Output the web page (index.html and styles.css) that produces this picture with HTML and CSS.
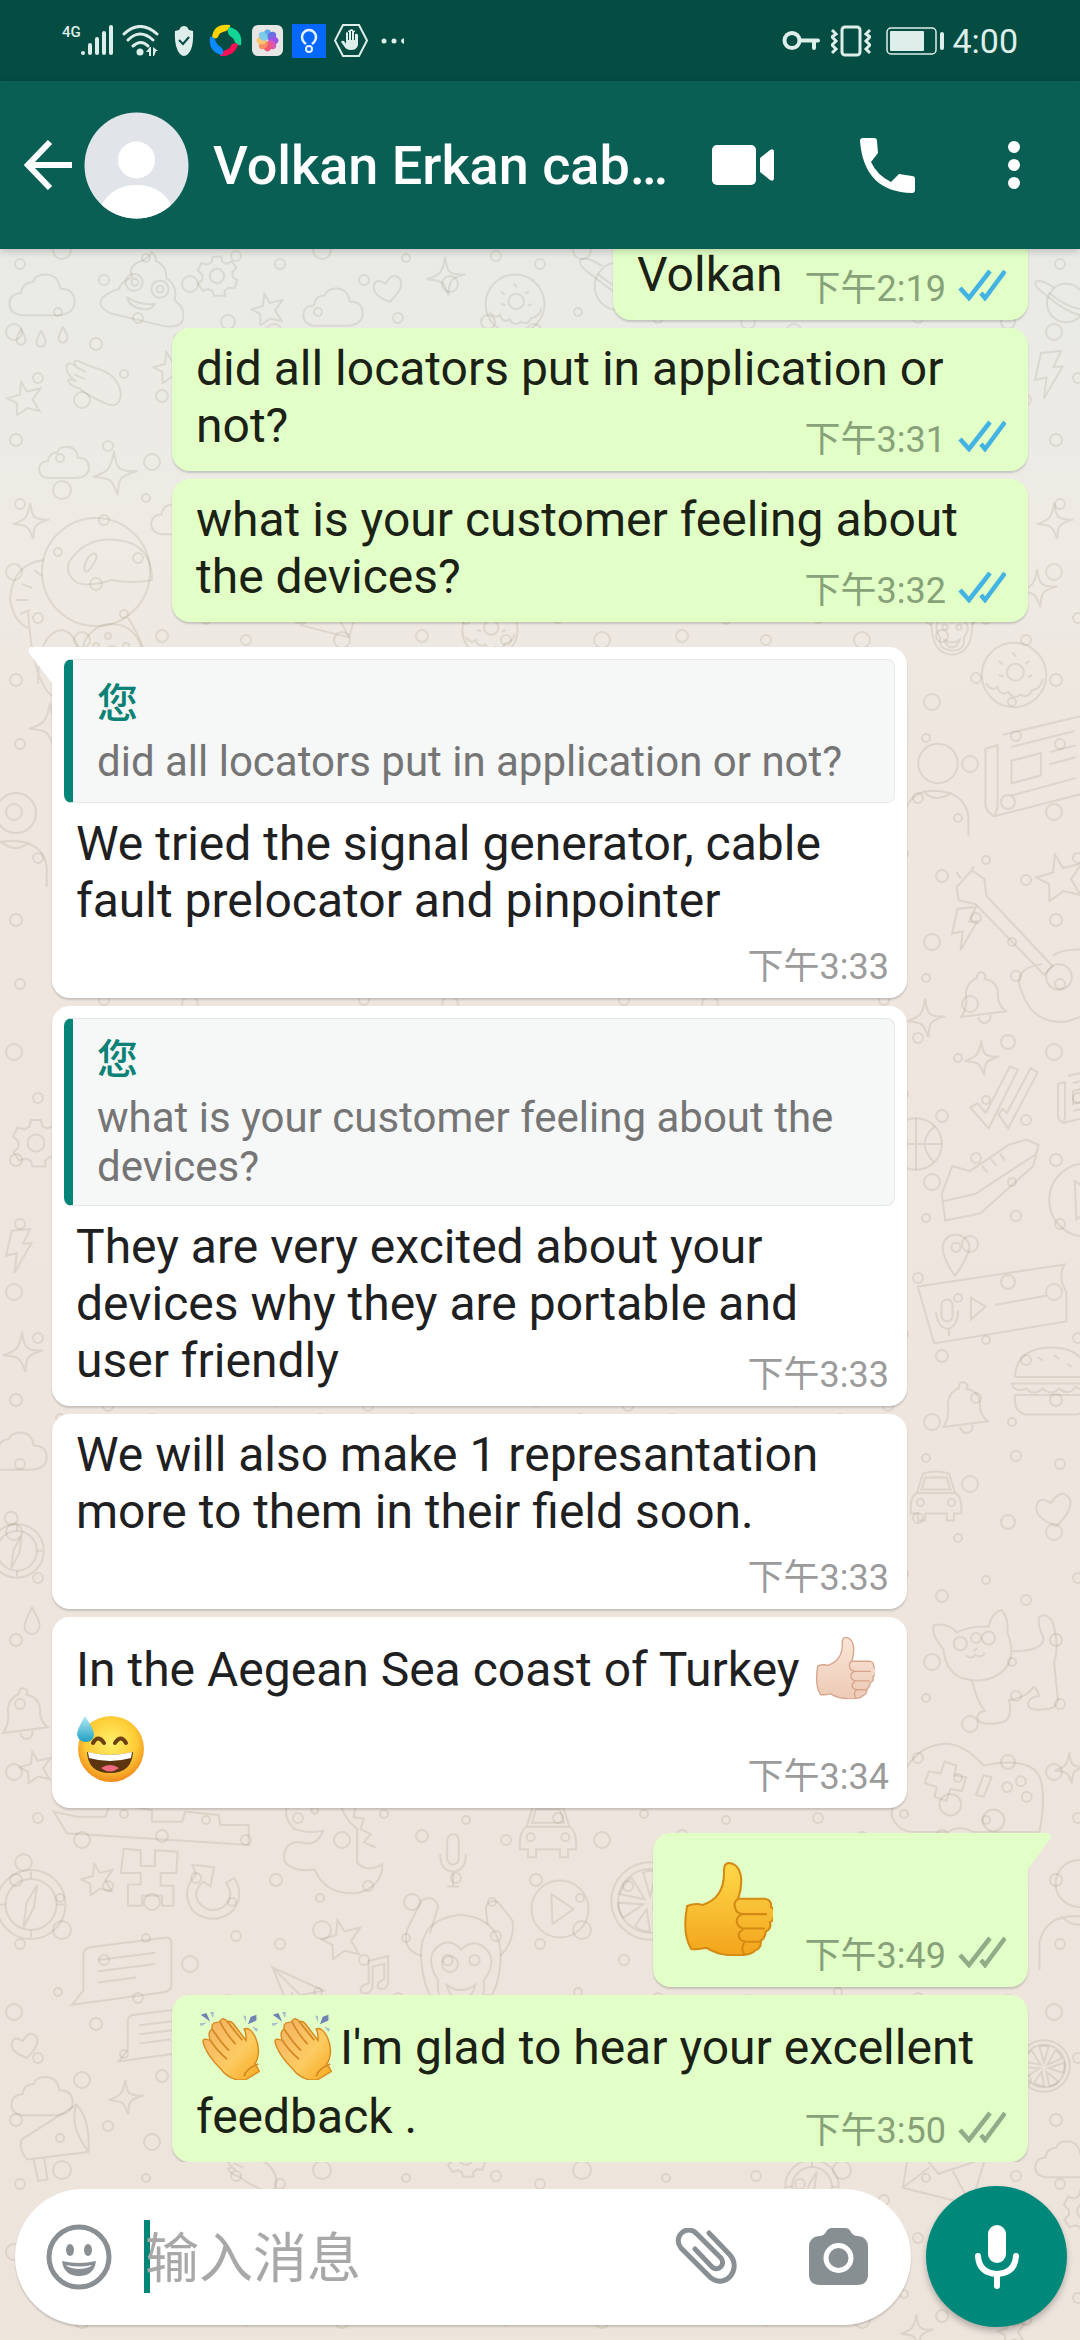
FILE: index.html
```html
<!DOCTYPE html>
<html lang="zh-CN">
<head>
  <meta charset="UTF-8">
  <meta name="viewport" content="width=device-width, initial-scale=1">
  <title>Volkan Erkan</title>
  <link rel="stylesheet" href="styles.css">
</head>
<body>
  <!-- shared shapes -->
  <svg class="defs" width="0" height="0" aria-hidden="true">
    <defs>
      <linearGradient id="skin" x1="0" y1="0" x2="0" y2="1">
        <stop offset="0" stop-color="#ffd94a"/>
        <stop offset="1" stop-color="#f2a41c"/>
      </linearGradient>
      <linearGradient id="clap-skin" x1="0" y1="0" x2="1" y2="1">
        <stop offset="0" stop-color="#f3b064"/>
        <stop offset=".6" stop-color="#fccb62"/>
        <stop offset="1" stop-color="#f6a81c"/>
      </linearGradient>
      <linearGradient id="skin-light" x1="0" y1="0" x2="0" y2="1">
        <stop offset="0" stop-color="#fbe6d8"/>
        <stop offset="1" stop-color="#eccab6"/>
      </linearGradient>
      <radialGradient id="face" cx=".5" cy=".4" r=".6">
        <stop offset="0" stop-color="#fff06a"/>
        <stop offset=".65" stop-color="#fdcb35"/>
        <stop offset="1" stop-color="#f08a1c"/>
      </radialGradient>
      <linearGradient id="drop" x1="0" y1="0" x2="0" y2="1">
        <stop offset="0" stop-color="#b5ecf5"/>
        <stop offset="1" stop-color="#1fa0c4"/>
      </linearGradient>

      <symbol id="ticks" viewBox="0 0 48 32">
        <path d="M2 19l9 10L32 2M23 24l4 5L47 2" fill="none" stroke="currentColor" stroke-width="4.500"/>
      </symbol>

      <symbol id="thumb" viewBox="0 0 88 92">
        <path d="M4 43q8-3 15-1q22-7 21-33q0-8 5-8q11 1 12 17q0 9-3 18h26q7 1 6 8q4 2 3 8q0 5-4 7q2 6-4 9q-1 7-5 9q1 7-6 10q-2 3-11 4q-22 2-36-7q-9 2-15 1q-9-14-4-42z"/>
        <path d="M54 36q-5 3-3 9q1 5 7 6h24M58 51q-7 3-5 9q2 5 7 5h20M59 66q-6 3-4 8q2 4 7 4h15M60 79q-4 5 0 12" fill="none"/>
      </symbol>

      <symbol id="clap" viewBox="0 0 66 72">
        <g fill="#6f83b5" stroke="none">
          <path d="M2 3l6-2 4 9z"/><path d="M52 13l3-8 6-2v6z"/>
        </g>
        <g fill="#a9bcc9" stroke="none">
          <path d="M12 0h4l-1 7zM1 12l8-1-7 4zM47 4h3v7zM56 15l7 3-2 3z"/>
        </g>
        <path d="M14 18q-1-7 5-7q3 0 4-2q3-4 7 1q4-1 7 3l13 17q0-9-2-12q6-3 12 9q4 9 3 17q-1 8-4 11q4 4 5 8l-15 9h-8q-12-3-18-12Q10 48 5 34q-2-6 3-5l4 1q-3-9 2-12z" fill="url(#clap-skin)" stroke="#d98a1e" stroke-width="1.500"/>
        <path d="M14 18q9 14 18 23M22 10q8 15 17 24M30 10l16 20M12 30q8 12 18 20M48 68q2-8 15-13" fill="none" stroke="#d48722" stroke-width="1.800"/>
      </symbol>

      <!-- wallpaper doodles -->
      <symbol id="d-cloud" viewBox="0 0 100 70"><path d="M20 62q-18-2-18-18q1-14 17-15q3-16 18-16q3-11 18-11q19 0 22 21q20 0 21 18q0 20-26 21z"/></symbol>
      <symbol id="d-star" viewBox="0 0 100 100"><path d="M42 5l16 27 38-9-22 31 19 32-34-8-28 20-1-34L4 51l34-10z"/></symbol>
      <symbol id="d-spark" viewBox="0 0 100 100"><path d="M48 2q3 30 12 38q12 8 38 6q-30 8-36 18q-5 10-6 34q-9-26-17-32Q30 60 2 58q26-8 33-17Q43 31 48 2z"/></symbol>
      <symbol id="d-heart" viewBox="0 0 100 90"><path d="M56 85Q2 66 6 36Q12 8 42 28Q70-14 90 18Q98 46 56 85z"/></symbol>
      <symbol id="d-gear" viewBox="0 0 100 100"><path d="M40 4h20l3 13 10 4 12-6 11 15-9 10v12l11 8-7 19-14-1-9 8 1 11H43l-4-12-10-4-13 4L5 68l10-9V47L4 37l9-18 14 4 10-6z"/><circle cx="50" cy="50" r="17"/></symbol>
      <symbol id="d-donut" viewBox="0 0 100 100"><circle cx="50" cy="50" r="46"/><circle cx="52" cy="46" r="12"/><path d="M10 62q8 12 16 5q5 14 16 7q6 12 17 4q12 6 16-6q14-2 16-16M28 30l6 5M48 18l5 6M72 30l-6 4M28 50l7 2M76 50l-6 3"/></symbol>
      <symbol id="d-drop" viewBox="0 0 40 60"><path d="M20 3q16 28 15 36q-2 16-15 17Q5 54 5 40Q6 30 20 3z"/></symbol>
      <symbol id="d-planet" viewBox="0 0 120 100"><circle cx="64" cy="52" r="36"/><path d="M30 40Q4 22 6 14Q12 4 40 22M30 40q40 34 70 36Q118 74 96 52M33 33q28 26 66 32"/></symbol>
      <symbol id="d-bolt" viewBox="0 0 60 100"><path d="M14 6l40-4-15 32 18-1-37 64 5-42-23 5z"/></symbol>
      <symbol id="d-astro" viewBox="0 0 180 190">
        <circle cx="88" cy="58" r="54"/><path d="M64 44q16-22 46-18q34 4 34 40q-20 4-40 0q-26 8-36 2q-14-12-4-24zM76 54q4-16 12-14q2 4-4 12q-6 10-8 2z"/>
        <path d="M36 46Q4 50 2 86q4 22 18 28M26 56l8 6M14 70l10 4M8 86h12M12 100l10-4M20 96q4 70 24 86M120 104q20 30 24 70M30 170q0-52 24-54q22 4 20 60"/>
        <circle cx="104" cy="140" r="30"/><circle cx="104" cy="140" r="8"/><circle cx="88" cy="132" r="3"/><circle cx="100" cy="122" r="3"/><circle cx="118" cy="132" r="3"/><circle cx="90" cy="152" r="3"/>
      </symbol>
      <symbol id="d-poop" viewBox="0 0 100 90"><path d="M40 30q-6-12 8-18q12-4 14-11q6 4 5 10q14 6 12 20q14 8 10 26q16 12 8 26q-6 6-20 4L14 72Q-6 62 10 50q10-6 14-6q2-8 16-14z"/><circle cx="42" cy="36" r="10"/><circle cx="72" cy="44" r="10"/><circle cx="43" cy="36" r="4"/><circle cx="72" cy="44" r="4"/><path d="M34 54q18 10 32 7q-4 8-14 6q-16-2-18-13z"/></symbol>
      <symbol id="d-hand" viewBox="0 0 100 80"><path d="M8 8q6-6 16 4q-8-14 4-10q10 6 36 14Q96 28 98 58q-2 22-22 16Q40 58 30 48q-16-4-20-14q4-4 14 2Q4 22 8 8zM24 12l16 8M20 24l18 8"/></symbol>
      <symbol id="d-news" viewBox="0 0 120 120"><path d="M24 24L116 2v90L14 118Q2 112 4 98V40l14-4v68q0 6-4 14M34 38l72-18M34 54l34-9v26l-34 9zM78 44l30-8M78 58l30-8M34 94l74-20"/></symbol>
      <symbol id="d-guitar" viewBox="0 0 140 150"><path d="M4 20L18 4l12 8 2 16 62 66-8 8-64-66-16-4zM8 12l-4-6M18 6l2-6M84 92q-30 4-18 28q10 28 40 26q34-8 30-34q10-26-12-34q-22 0-30 6"/><circle cx="100" cy="104" r="12"/></symbol>
      <symbol id="d-bell" viewBox="0 0 90 100"><path d="M34 14q0-12 10-10q8 4 4 12q26 4 24 34q2 14 14 24L6 84Q18 66 14 40Q18 20 34 14zM36 84q4 14 16 10q8-4 6-14"/></symbol>
      <symbol id="d-ticks" viewBox="0 0 100 100"><path d="M2 62l10-6 12 14L58 4l12 4-42 84zM42 72l6-8 6 6L88 6l10 6-42 80z"/></symbol>
      <symbol id="d-ball" viewBox="0 0 100 100"><circle cx="50" cy="50" r="46"/><path d="M50 4v92M4 50h92M16 18q36 30 2 64M84 18q-36 30-2 64"/></symbol>
      <symbol id="d-shoe" viewBox="0 0 120 100"><path d="M4 66L16 34l20 6 44-30 20-6 14 6-6 24-60 54-40 8zM6 74l36-8 70-46M50 34l6 8M60 26l6 8M70 20l6 8"/></symbol>
      <symbol id="d-voice" viewBox="0 0 170 90"><path d="M4 26L164 2q-8 14 2 30v32L22 88zM62 38v24l16-14zM88 46l56-10"/><rect x="30" y="40" width="12" height="24" rx="6"/><path d="M24 54q2 18 14 18q10-4 10-20M38 72v8"/></symbol>
      <symbol id="d-burger" viewBox="0 0 100 90"><path d="M6 40Q8 4 50 4t44 36zM2 48h96q-6 12-18 4q-8 12-20 2q-10 10-20 0q-12 10-20 0Q6 60 2 48zM6 62h88q2 22-14 24H20Q4 84 6 62zM34 16l6 4M54 14l6 4M70 24l5 4"/></symbol>
      <symbol id="d-cat" viewBox="0 0 140 130"><path d="M14 44Q0 28 4 18q16-2 24 8q18-8 34-6Q66 4 76 2q8 10 6 24q12 30-8 44q-18 12-42 4Q16 66 14 44zM88 46q36 0 32-16q-6-12-4-20q6-6 14 4q8 26 2 44q2 22 4 40q-2 10-14 10q-18 2-18-6q2-8 12-8q-2-8-6-10q-8 12-26 14q4 22-8 24q-22 4-26-4q0-8 8-8q-8-10-14-34"/><circle cx="32" cy="38" r="7"/><circle cx="62" cy="32" r="7"/><path d="M38 50q6 6 10 0q6 4 10-2M46 46l4-3"/></symbol>
      <symbol id="d-pad" viewBox="0 0 160 100"><path d="M2 76Q12 8 54 4q20-2 42 22q50-10 58 14q6 20-2 58M2 76q4 16 22 18h36q10-8 26 0h66M56 22l12 4-2 10 12 2-4 14-12-2-4 12-12-4 2-10-12-4 4-12 12 2zM96 36l8 2-8 20-8-2z"/><circle cx="62" cy="66" r="11"/><circle cx="106" cy="82" r="11"/><circle cx="120" cy="48" r="5"/><circle cx="134" cy="42" r="5"/><circle cx="140" cy="58" r="5"/></symbol>
      <symbol id="d-compass" viewBox="0 0 100 120"><circle cx="50" cy="70" r="46"/><circle cx="50" cy="70" r="34"/><circle cx="40" cy="14" r="11"/><path d="M58 44l-4 30-14 26 4-32zM50 26v10M50 104v10M6 70h10M84 70h10"/></symbol>
      <symbol id="d-creeper" viewBox="0 0 90 90"><path d="M8 4l24 2v22h20V6l32 2-2 30H60v18h18v28H62V70H34v14H14V54h18V38H4z"/></symbol>
      <symbol id="d-arrow" viewBox="0 0 100 100"><path d="M20 24l-6-16 36 4-6 32-12-8q-18 16-8 34q18 22 42 8q20-18 4-40l14-8q18 30-4 56q-32 24-64 0Q-8 54 20 24z"/></symbol>
      <symbol id="d-play" viewBox="0 0 100 100"><circle cx="50" cy="50" r="46"/><path d="M36 26l36 24-34 24z"/></symbol>
      <symbol id="d-citrus" viewBox="0 0 100 100"><circle cx="50" cy="50" r="46"/><circle cx="50" cy="50" r="38"/><path d="M50 44L42 16q8-4 16 0zM56 48l14-26q8 4 12 14zM58 54l28-10q2 10-2 18zM54 60l22 18q-8 8-16 8zM46 60l4 26q-10 0-18-6zM42 54L18 70q-6-8-6-18zM44 48L14 42q4-12 14-20z"/></symbol>
      <symbol id="d-chat" viewBox="0 0 130 90"><path d="M26 14L122 2q6 0 6 8v52q0 6-8 8l-86 12-30 4 14-18V24q0-8 8-10zM36 30l72-9M36 44l72-9M36 58l48-6"/></symbol>
      <symbol id="d-monkey" viewBox="0 0 120 120"><path d="M22 68Q16 24 60 20q42 4 38 48q-4 46-38 48Q26 114 22 68zM38 84q-16-26 4-36q10-4 18 6q10-10 20-4q18 12 2 34q4 24-22 24q-26-2-22-24z"/><circle cx="47" cy="64" r="5"/><circle cx="73" cy="64" r="5"/><path d="M46 88q14 10 28 0q-4 14-14 14t-14-14zM22 60Q2 54 8 34l14-28q12-6 16 6l-8 26M98 60q14-14 12-34L96 8Q86 4 84 14l2 16"/></symbol>
      <symbol id="d-mic" viewBox="0 0 60 100"><rect x="20" y="4" width="20" height="52" rx="10"/><path d="M8 38q0 30 22 30t22-30M30 68v26M20 94h20"/></symbol>
      <symbol id="d-horn" viewBox="0 0 100 110"><path d="M6 52L78 6q18 18 16 62L14 78Q2 66 6 52zM78 6q-10 28 16 62M22 78l6 28 12-2-4-28"/></symbol>
      <symbol id="d-mail" viewBox="0 0 110 90"><path d="M12 4l96 22-18 60L2 64zM12 4l36 42 60-20M2 64l34-26M90 86L66 42"/></symbol>
      <symbol id="d-car" viewBox="0 0 100 90"><path d="M18 40L28 8q22-8 44 0l10 32q12 6 10 34H80v12H68V74H32v12H20V74H8Q6 46 18 40zM18 40h64M32 14h36l6 20H26z"/><circle cx="24" cy="56" r="6"/><circle cx="76" cy="56" r="6"/></symbol>
      <symbol id="d-note" viewBox="0 0 70 90"><path d="M22 14l40-10v58q-6 14-20 8q-6-12 12-18V20L30 26v44q-8 16-24 8q-4-14 16-18z"/></symbol>
      <symbol id="d-plane" viewBox="0 0 100 90"><path d="M4 6l92 42-42 8-18 28zM4 6l50 50M36 84l4-34"/></symbol>
      <symbol id="d-dino" viewBox="0 0 150 130"><path d="M16 6Q2 30 20 46q14 6 34 2q-8 20-26 14q-22-2-20 22q10 14 36 10q12 30 50 28q30-8 30-34q-18 10-30-2V46q-14-10-20-30M84 8l-4 12 12 0-2 12 12 2-4 12 12 6-8 10 14 6"/><circle cx="44" cy="24" r="4"/></symbol>
      <symbol id="d-ship" viewBox="0 0 240 60"><path d="M2 14l28 6h34l6-16 50 8v14h36l4-12 40 4 2 12h34v24L18 40z"/></symbol>
      <symbol id="d-pin" viewBox="0 0 60 90"><path d="M28 86Q2 48 4 28Q10 2 34 6q24 6 22 28Q50 54 28 86z"/><circle cx="30" cy="30" r="9"/></symbol>
      <symbol id="d-people" viewBox="0 0 100 130"><circle cx="50" cy="30" r="26"/><path d="M6 126V96q6-30 40-30q40 2 44 34v26M30 66q16 18 38 2"/></symbol>

      <pattern id="bubbles" width="260" height="240" patternUnits="userSpaceOnUse">
        <circle cx="20" cy="24" r="5"/><circle cx="62" cy="10" r="9"/><circle cx="104" cy="40" r="5"/>
        <circle cx="146" cy="18" r="4"/><circle cx="190" cy="44" r="8"/><circle cx="236" cy="16" r="5"/>
        <circle cx="14" cy="92" r="8"/><circle cx="58" cy="72" r="4"/><circle cx="96" cy="104" r="6"/>
        <circle cx="138" cy="78" r="5"/><circle cx="178" cy="98" r="4"/><circle cx="228" cy="82" r="7"/>
        <circle cx="38" cy="138" r="5"/><circle cx="82" cy="160" r="8"/><circle cx="124" cy="134" r="4"/>
        <circle cx="162" cy="156" r="6"/><circle cx="206" cy="140" r="4"/><circle cx="246" cy="160" r="5"/>
        <circle cx="16" cy="200" r="6"/><circle cx="60" cy="218" r="4"/><circle cx="108" cy="206" r="5"/>
        <circle cx="152" cy="222" r="8"/><circle cx="196" cy="198" r="5"/><circle cx="232" cy="222" r="4"/>
      </pattern>
    </defs>
  </svg>

  <div class="app">
    <svg class="wallpaper" viewBox="0 0 1080 2340" preserveAspectRatio="xMidYMin slice" aria-hidden="true">
      <rect width="1080" height="2340" fill="url(#bubbles)" stroke="none"/>
      <use href="#d-cloud" x="8" y="272" width="68" height="50"/>
      <use href="#d-poop" x="98" y="246" width="86" height="88"/>
      <use href="#d-gear" x="196" y="254" width="42" height="44"/>
      <use href="#d-star" x="250" y="292" width="34" height="34"/>
      <use href="#d-cloud" x="302" y="286" width="62" height="46"/>
      <use href="#d-heart" x="372" y="274" width="32" height="30"/>
      <use href="#d-spark" x="426" y="256" width="40" height="40"/>
      <use href="#d-donut" x="470" y="272" width="90" height="64"/>
      <use href="#d-planet" x="576" y="250" width="80" height="70"/>
      <use href="#d-drop" x="14" y="328" width="14" height="18"/>
      <use href="#d-drop" x="34" y="330" width="14" height="18"/>
      <use href="#d-drop" x="56" y="326" width="14" height="18"/>
      <use href="#d-hand" x="62" y="358" width="60" height="52"/>
      <use href="#d-star" x="6" y="380" width="36" height="36"/>
      <use href="#d-star" x="152" y="350" width="34" height="34"/>
      <use href="#d-cloud" x="38" y="442" width="52" height="44"/>
      <use href="#d-spark" x="92" y="450" width="46" height="46"/>
      <use href="#d-spark" x="12" y="502" width="38" height="38"/>
      <use href="#d-astro" x="8" y="514" width="180" height="190"/>
      <use href="#d-cloud" x="150" y="490" width="60" height="56"/>
      <use href="#d-planet" x="1032" y="272" width="64" height="60"/>
      <use href="#d-bolt" x="1032" y="350" width="34" height="50"/>
      <use href="#d-spark" x="1036" y="502" width="38" height="38"/>
      <use href="#d-spark" x="1018" y="566" width="40" height="44"/>
      <use href="#d-donut" x="460" y="600" width="60" height="60"/>
      <use href="#d-mail" x="300" y="590" width="60" height="50"/>
      <use href="#d-monkey" x="920" y="590" width="64" height="70"/>
      <use href="#d-donut" x="974" y="640" width="80" height="70"/>
      <use href="#d-spark" x="28" y="700" width="46" height="50"/>
      <use href="#d-people" x="-24" y="790" width="80" height="100"/>
      <use href="#d-people" x="900" y="740" width="76" height="100"/>
      <use href="#d-news" x="982" y="714" width="104" height="104"/>
      <use href="#d-guitar" x="952" y="866" width="150" height="160"/>
      <use href="#d-star" x="1034" y="852" width="50" height="50"/>
      <use href="#d-bolt" x="948" y="906" width="34" height="46"/>
      <use href="#d-bell" x="958" y="970" width="50" height="56"/>
      <use href="#d-spark" x="906" y="996" width="40" height="44"/>
      <use href="#d-spark" x="964" y="1038" width="36" height="40"/>
      <use href="#d-ticks" x="964" y="1064" width="80" height="70"/>
      <use href="#d-news" x="1056" y="1064" width="60" height="60"/>
      <use href="#d-ball" x="886" y="1116" width="60" height="56"/>
      <use href="#d-shoe" x="936" y="1136" width="110" height="88"/>
      <use href="#d-play" x="1046" y="1160" width="80" height="80"/>
      <use href="#d-pin" x="938" y="1232" width="36" height="46"/>
      <use href="#d-voice" x="914" y="1262" width="156" height="84"/>
      <use href="#d-gear" x="10" y="1118" width="52" height="50"/>
      <use href="#d-bolt" x="2" y="1228" width="34" height="46"/>
      <use href="#d-spark" x="2" y="1330" width="42" height="44"/>
      <use href="#d-burger" x="1010" y="1344" width="82" height="74"/>
      <use href="#d-bell" x="940" y="1380" width="50" height="56"/>
      <use href="#d-cloud" x="-14" y="1430" width="62" height="46"/>
      <use href="#d-car" x="906" y="1466" width="60" height="60"/>
      <use href="#d-heart" x="1034" y="1490" width="40" height="40"/>
      <use href="#d-compass" x="-14" y="1510" width="62" height="70"/>
      <use href="#d-drop" x="22" y="1606" width="20" height="30"/>
      <use href="#d-bell" x="0" y="1686" width="50" height="56"/>
      <use href="#d-star" x="18" y="1750" width="34" height="34"/>
      <use href="#d-cat" x="926" y="1608" width="140" height="122"/>
      <use href="#d-pad" x="888" y="1740" width="160" height="98"/>
      <use href="#d-spark" x="1054" y="1752" width="32" height="32"/>
      <use href="#d-ship" x="34" y="1800" width="236" height="50"/>
      <use href="#d-dino" x="266" y="1790" width="150" height="110"/>
      <use href="#d-car" x="510" y="1800" width="76" height="60"/>
      <use href="#d-compass" x="-8" y="1852" width="78" height="90"/>
      <use href="#d-star" x="80" y="1862" width="34" height="34"/>
      <use href="#d-creeper" x="118" y="1846" width="64" height="64"/>
      <use href="#d-arrow" x="184" y="1856" width="60" height="68"/>
      <use href="#d-mic" x="434" y="1832" width="38" height="58"/>
      <use href="#d-play" x="528" y="1878" width="64" height="62"/>
      <use href="#d-citrus" x="608" y="1858" width="84" height="86"/>
      <use href="#d-star" x="320" y="1918" width="42" height="42"/>
      <use href="#d-monkey" x="396" y="1894" width="130" height="124"/>
      <use href="#d-plane" x="264" y="1964" width="68" height="50"/>
      <use href="#d-note" x="358" y="1954" width="34" height="44"/>
      <use href="#d-chat" x="54" y="1936" width="134" height="72"/>
      <use href="#d-chat" x="108" y="2006" width="100" height="58"/>
      <use href="#d-heart" x="10" y="2032" width="30" height="28"/>
      <use href="#d-cloud" x="10" y="2070" width="64" height="56"/>
      <use href="#d-spark" x="108" y="2076" width="36" height="42"/>
      <use href="#d-horn" x="10" y="2100" width="90" height="84"/>
      <use href="#d-hand" x="210" y="2150" width="80" height="44"/>
      <use href="#d-gear" x="446" y="2138" width="40" height="40"/>
      <use href="#d-compass" x="782" y="2146" width="60" height="70"/>
      <use href="#d-people" x="1034" y="1850" width="90" height="130"/>
      <use href="#d-citrus" x="1016" y="2038" width="56" height="56"/>
      <use href="#d-mail" x="896" y="2138" width="96" height="70"/>
      <use href="#d-cloud" x="1034" y="2136" width="60" height="50"/>
      <use href="#d-gear" x="1062" y="2188" width="46" height="46"/>
      <use href="#d-spark" x="900" y="2314" width="34" height="34"/>
      <use href="#d-star" x="996" y="2316" width="30" height="30"/>
    </svg>

    <div class="screen">
      <div class="status-bar">
        <div class="status-left">
          <span class="network">4G</span>
          <svg width="33" height="31" viewBox="0 0 33 31" fill="currentColor">
            <circle cx="2" cy="28" r="2"/><rect x="7" y="18" width="4" height="12" rx="2"/><rect x="14" y="12" width="4" height="18" rx="2"/><rect x="21" y="6" width="4" height="24" rx="2"/><rect x="28" y="0" width="4" height="30" rx="2"/>
          </svg>
          <svg class="wifi" width="38" height="32" viewBox="0 0 38 32">
            <g fill="none" stroke="currentColor" stroke-width="3" stroke-linecap="round">
              <path d="M2 9Q18-6 35 9M6 15q12-12 25 0M11 21q8-7 15 0"/>
            </g>
            <circle cx="18" cy="27" r="3.500" fill="currentColor"/>
            <path d="M24 27l4-5h1v9h-2v-4zM31 22l5 4h-2l-2 5h-1z" fill="currentColor"/>
          </svg>
          <svg class="shield" width="20" height="32" viewBox="0 0 20 32">
            <path d="M7 2q3-2 6 0l2 3 4 1q1 17-5 23q-4 4-8 0Q0 22 1 6l4-1z" fill="currentColor"/>
            <path d="M5 15l4 4 6-7" fill="none" stroke="#054c43" stroke-width="2"/>
          </svg>
          <svg class="wheel" width="33" height="33" viewBox="0 0 33 33">
            <path d="M3 13Q5-1 21 1q1 5-7 7q-4 1-5 5q-3 3-6 0z" fill="#ffd400"/>
            <path d="M20 3q14 3 12 18q-4 1-6-3q-1-4-5-6q-4-4-1-9z" fill="#12d694"/>
            <path d="M29 20q-3 13-18 12q-1-4 6-6q4-1 5-5q3-3 7-1z" fill="#fb0f56"/>
            <path d="M1 13q4-1 6 5q1 3 5 5q4 4 1 8Q-1 28 1 13z" fill="#0c8bff"/>
          </svg>
          <svg class="gallery" width="31" height="31" viewBox="0 0 31 31">
            <rect width="31" height="31" rx="6" fill="#e6e6e4"/>
            <g transform="translate(15.500 15.500)">
              <ellipse cy="-6" rx="4" ry="5" fill="#5aa9ea"/>
              <ellipse cy="-6" rx="4" ry="5" fill="#6a6fe0" transform="rotate(45)"/>
              <ellipse cy="-6" rx="4" ry="5" fill="#9a55e6" transform="rotate(90)"/>
              <ellipse cy="-6" rx="4" ry="5" fill="#d958b0" transform="rotate(135)"/>
              <ellipse cy="-6" rx="4" ry="5" fill="#f0557a" transform="rotate(180)"/>
              <ellipse cy="-6" rx="4" ry="5" fill="#fb8c62" transform="rotate(225)"/>
              <ellipse cy="-6" rx="4" ry="5" fill="#fbc571" transform="rotate(270)"/>
              <ellipse cy="-6" rx="4" ry="5" fill="#7ccbe8" transform="rotate(315)"/>
            </g>
          </svg>
          <svg class="tip" width="34" height="34" viewBox="0 0 34 34">
            <rect width="34" height="34" fill="#0668fb"/>
            <path d="M14 20q-4-3-4-7a7 7 0 0 1 14 0q0 4-4 7" fill="none" stroke="#e6f2ff" stroke-width="2.500"/>
            <circle cx="17" cy="25" r="3" fill="none" stroke="#e6f2ff" stroke-width="2"/>
          </svg>
          <svg class="stop" width="34" height="33" viewBox="0 0 34 33">
            <path d="M9 1h16l8 15.500L25 32H9L1 16.500z" fill="none" stroke="currentColor" stroke-width="2"/>
            <path d="M12 20V9q1-2 2 0V7q2-2 2 0V6q2-2 3 0v1q2-2 2 1v2q2-1 3 1v10q-1 5-7 5q-5 0-7-4l-3-4q1-2 3-1z" fill="currentColor"/>
            <path d="M14.500 8v8M17.500 7v9M20.500 8v8" stroke="#054c43" stroke-width="1"/>
          </svg>
          <svg class="more" width="24" height="6" viewBox="0 0 24 6" fill="currentColor"><circle cx="3" cy="3" r="2.500"/><circle cx="13" cy="3" r="2.500"/><path d="M23 0v6q-3-1-3-3t3-3z"/></svg>
        </div>
        <div class="status-right">
          <svg width="39" height="19" viewBox="0 0 39 19">
            <circle cx="10" cy="9.500" r="7.500" fill="none" stroke="currentColor" stroke-width="4"/>
            <path d="M18 9.500h18M32 10v7" fill="none" stroke="currentColor" stroke-width="4" stroke-linecap="round"/>
          </svg>
          <svg class="vibrate" width="40" height="32" viewBox="0 0 40 32" fill="none" stroke="currentColor" stroke-width="3">
            <rect x="11" y="2" width="18" height="28" rx="3"/>
            <path d="M1 5l4 4-4 3 4 4-4 4 4 4-4 4M39 5l-4 4 4 3-4 4 4 4-4 4 4 4"/>
          </svg>
          <svg class="battery" width="58" height="28" viewBox="0 0 58 28">
            <rect x="1" y="1" width="49" height="26" rx="4" fill="none" stroke="currentColor" stroke-width="1.500"/>
            <rect x="4" y="4" width="34" height="20" rx="1" fill="currentColor"/>
            <rect x="54" y="5" width="4" height="18" rx="2" fill="currentColor"/>
          </svg>
          <span class="clock">4:00</span>
        </div>
      </div>

      <header class="chat-header">
        <button class="icon-button back" aria-label="返回">
          <svg width="48" height="50" viewBox="0 0 48 50"><path d="M26 2L4 25l22 23M4 25h44" fill="none" stroke="#fff" stroke-width="6"/></svg>
        </button>
        <svg class="avatar" width="105" height="107" viewBox="0 0 105 107">
          <defs><clipPath id="round"><ellipse cx="52.500" cy="53.500" rx="52" ry="53"/></clipPath></defs>
          <g clip-path="url(#round)">
            <rect width="105" height="107" fill="#e1e5e9"/>
            <circle cx="52.500" cy="48" r="18.500" fill="#fff"/>
            <path d="M17 94q11-21 35.500-21T88 94v20H17z" fill="#fff"/>
          </g>
        </svg>
        <h1 class="contact">Volkan Erkan cab…</h1>
        <button class="icon-button video" aria-label="视频通话">
          <svg width="62" height="40" viewBox="0 0 62 40" fill="#fff"><rect width="44" height="40" rx="5"/><path d="M48 13l10-8q4-2 4 2v26q0 4-4 2l-10-8z"/></svg>
        </button>
        <button class="icon-button call" aria-label="语音通话">
          <svg width="55" height="55" viewBox="0 0 55 55" fill="#fff"><path d="M3 0h11q3 0 3 3l1 12-7 9q6 13 20 20l8-8 13 2q3 0 3 3v11q0 3-3 3Q4 54 0 3q0-3 3-3z"/></svg>
        </button>
        <button class="icon-button menu" aria-label="更多选项">
          <svg width="12" height="48" viewBox="0 0 12 48" fill="#fff"><circle cx="6" cy="6" r="6"/><circle cx="6" cy="24" r="6"/><circle cx="6" cy="42" r="6"/></svg>
        </button>
      </header>

      <main class="messages">
        <div class="bubble sent">
          <div class="content inline">
            <p class="text">Volkan</p>
            <div class="meta read"><time>下午2:19</time><svg class="ticks"><use href="#ticks"/></svg></div>
          </div>
        </div>

        <div class="bubble sent">
          <div class="content">
            <p class="text">did all locators put in application or not?</p>
            <div class="meta read"><time>下午3:31</time><svg class="ticks"><use href="#ticks"/></svg></div>
          </div>
        </div>

        <div class="bubble sent">
          <div class="content">
            <p class="text">what is your customer feeling about the devices?</p>
            <div class="meta read"><time>下午3:32</time><svg class="ticks"><use href="#ticks"/></svg></div>
          </div>
        </div>

        <div class="bubble received first">
          <svg class="tail" width="24" height="36" viewBox="0 0 24 36"><path d="M24 0H3Q-1 2 1 6l23 30z" fill="#fff"/></svg>
          <blockquote class="quote">
            <div class="quote-name">您</div>
            <div class="quote-text">did all locators put in application or not?</div>
          </blockquote>
          <div class="content time-below">
            <p class="text">We tried the signal generator, cable fault prelocator and pinpointer</p>
            <div class="meta"><time>下午3:33</time></div>
          </div>
        </div>

        <div class="bubble received">
          <blockquote class="quote">
            <div class="quote-name">您</div>
            <div class="quote-text">what is your customer feeling about the devices?</div>
          </blockquote>
          <div class="content">
            <p class="text">They are very excited about your devices why they are portable and user friendly</p>
            <div class="meta"><time>下午3:33</time></div>
          </div>
        </div>

        <div class="bubble received">
          <div class="content time-below">
            <p class="text">We will also make 1 represantation more to them in their field soon.</p>
            <div class="meta"><time>下午3:33</time></div>
          </div>
        </div>

        <div class="bubble received">
          <div class="content">
            <p class="text">In the Aegean Sea coast of Turkey <svg class="emoji light" viewBox="-6 0 100 92" role="img" aria-label="thumbs up"><use href="#thumb" width="88" height="92"/></svg>
              <svg class="emoji" viewBox="0 0 68 68" role="img" aria-label="sweat smile">
                <circle cx="35" cy="34" r="33" fill="url(#face)"/>
                <path d="M17 28q5-9 11 0M39 28q6-9 11 0" class="brow"/>
                <path d="M11 37q23 6 46 0q-1 21-23 21T11 37z" fill="#5d3410"/>
                <path d="M12 37q22 6 44 0l-1 6q-21 6-42 0z" fill="#fff"/>
                <path d="M25 53q9-6 18 0q-9 7-18 0z" fill="#ef6a80"/>
                <path d="M9 1q9 13 9 19q-1 7-8 7T1 20Q1 14 9 1z" fill="url(#drop)"/>
              </svg></p>
            <div class="meta"><time>下午3:34</time></div>
          </div>
        </div>

        <div class="bubble sent first">
          <svg class="tail" width="24" height="36" viewBox="0 0 24 36"><path d="M0 0h20q4 2 2 6L0 36z" fill="#e1ffc7"/></svg>
          <div class="content inline">
            <p class="text big-emoji"><svg class="thumb" viewBox="0 0 88 92" role="img" aria-label="thumbs up"><use href="#thumb"/></svg></p>
            <div class="meta"><time>下午3:49</time><svg class="ticks"><use href="#ticks"/></svg></div>
          </div>
        </div>

        <div class="bubble sent">
          <div class="content">
            <p class="text"><svg class="emoji" viewBox="0 0 66 72" role="img" aria-label="clap"><use href="#clap"/></svg><svg class="emoji" viewBox="0 0 66 72" role="img" aria-label="clap"><use href="#clap"/></svg>I'm glad to hear your excellent feedback .</p>
            <div class="meta"><time>下午3:50</time><svg class="ticks"><use href="#ticks"/></svg></div>
          </div>
        </div>
      </main>

      <form class="composer">
        <div class="input-pill">
          <button type="button" class="icon-button" aria-label="表情">
            <svg width="66" height="66" viewBox="0 0 66 66">
              <circle cx="33" cy="33" r="30" fill="none" stroke="#8a8f94" stroke-width="5"/>
              <ellipse cx="24" cy="26" rx="4" ry="6" fill="#8a8f94"/><ellipse cx="42" cy="26" rx="4" ry="6" fill="#8a8f94"/>
              <path d="M16 37q17 4 34 0q-2 15-17 15T16 37z" fill="#8a8f94"/>
              <path d="M20 41q13 3 26 0q-2 3-13 4q-11-1-13-4z" fill="#fff"/>
            </svg>
          </button>
          <input class="message-input" type="text" placeholder="输入消息" aria-label="输入消息">
          <button type="button" class="icon-button attach" aria-label="附件">
            <svg width="64" height="58" viewBox="0 0 64 58" fill="none" stroke="#8a8f94" stroke-width="5" stroke-linecap="round">
              <path d="M34 5l21 22c12 14-4 34-19 23L6 20C-3 9 12-5 22 6l24 24c5 7-3 14-9 9L20 21"/>
            </svg>
          </button>
          <button type="button" class="icon-button camera" aria-label="相机">
            <svg width="59" height="57" viewBox="0 0 59 57">
              <path d="M10 8q5 0 7-4q2-4 6-4h13q4 0 6 4q2 4 7 4q10 1 10 11v27q0 11-11 11H11Q0 57 0 46V19Q0 9 10 8z" fill="#888f92"/>
              <circle cx="29.500" cy="30" r="12.500" fill="none" stroke="#fff" stroke-width="5"/>
            </svg>
          </button>
        </div>
        <button type="button" class="mic-button" aria-label="语音消息">
          <svg width="44" height="64" viewBox="0 0 44 64">
            <rect x="13" y="0" width="18" height="38" rx="9" fill="#fff"/>
            <path d="M3 31q1 17 19 18q18-1 19-18M22 50v11" fill="none" stroke="#fff" stroke-width="6" stroke-linecap="round"/>
          </svg>
        </button>
      </form>
    </div>
  </div>
</body>
</html>
```

FILE: styles.css
```css
* {
  box-sizing: border-box;
}

body {
  margin: 0;
  font-family: Roboto, "Noto Sans CJK SC", sans-serif;
  color: #1f2021;
}

button {
  border: none;
  padding: 0;
  background: none;
  cursor: pointer;
}

p, h1, blockquote {
  margin: 0;
}

svg {
  display: block;
  flex: none;
}

.defs {
  position: absolute;
}

.app {
  display: grid;
  height: 100vh;
  overflow: hidden;
  background: linear-gradient(#e9eae6 10%, #eeebe5 22%, #eee6df 32%, #ede4dc 100%);
}

/* wallpaper and screen share one grid cell */
.wallpaper,
.screen {
  grid-area: 1 / 1;
  width: 100%;
  height: 100vh;
  min-width: 0;
}

.wallpaper,
.defs pattern {
  fill: none;
  stroke: rgba(95, 90, 60, 0.12);
  stroke-width: 2;
}

/* keep the doodle lines equally thick at any size */
.defs symbol[id^="d-"] * {
  vector-effect: non-scaling-stroke;
}

.screen {
  display: flex;
  flex-direction: column;
}

/* status bar */
.status-bar {
  display: flex;
  justify-content: space-between;
  align-items: center;
  height: 81px;
  padding: 0 62px;
  background-color: #054c43;
  color: #deeeea;
  z-index: 1;
}

.status-left,
.status-right {
  display: flex;
  align-items: center;
}

.network {
  align-self: flex-start;
  font-size: 15px;
  font-weight: 500;
  line-height: 16px;
}

.wifi { margin-left: 8px; }
.shield { margin-left: 14px; }
.wheel { margin-left: 15px; }
.gallery { margin-left: 10px; }
.tip { margin-left: 9px; }
.stop { margin-left: 8px; }
.more { margin-left: 13px; }
.vibrate { margin-left: 10px; }
.battery { margin-left: 15px; }

.clock {
  margin-left: 8px;
  font-size: 34px;
}

/* header */
.chat-header {
  display: flex;
  align-items: center;
  height: 168px;
  padding: 0 60px 0 24px;
  background-color: #095f54;
  box-shadow: 0 2px 8px rgba(0, 0, 0, 0.2);
  z-index: 1;
}

.avatar {
  margin-left: 12px;
}

.contact {
  flex: 1;
  min-width: 0;
  margin-left: 24px;
  overflow: hidden;
  color: #fff;
  font-size: 54px;
  font-weight: 500;
  white-space: nowrap;
  text-overflow: ellipsis;
}

.video { margin-left: 40px; }
.call { margin-left: 86px; }
.menu { margin-left: 93px; }

/* messages */
.messages {
  flex: 1;
  min-height: 0;
  display: flex;
  flex-direction: column;
  justify-content: flex-end;
  gap: 8px;
  padding: 0 52px;
  overflow: hidden;
}

.bubble {
  position: relative;
  flex: none;
  padding: 12px 12px 10px;
  border-radius: 18px;
  box-shadow: 0 2px 2px rgba(0, 0, 0, 0.16);
}

.sent {
  align-self: flex-end;
  margin-left: 120px;
  background-color: #e1ffc7;
  color: #1b2114;
}

.received {
  align-self: flex-start;
  margin-right: 121px;
  background-color: #fff;
}

.first {
  margin-top: 17px;
}

.sent.first {
  border-top-right-radius: 0;
}

.received.first {
  border-top-left-radius: 0;
}

.tail {
  position: absolute;
  top: 0;
}

.sent .tail {
  left: 100%;
}

.received .tail {
  right: 100%;
}

.content {
  display: grid;
  padding: 0 10px 0 12px;
}

.text,
.meta {
  grid-area: 1 / 1;
}

.text {
  padding-bottom: 7px;
  font-size: 48px;
  line-height: 57px;
}

.time-below .text {
  padding-bottom: 59px;
}

.inline {
  display: flex;
  gap: 22px;
}

.meta {
  align-self: end;
  justify-self: end;
  display: flex;
  align-items: baseline;
  gap: 12px;
  font-size: 36px;
  line-height: 42px;
  color: #9b9b9b;
}

.received .meta {
  margin-right: -4px;
}

.sent .meta {
  color: #87a178;
}

.ticks {
  width: 48px;
  height: 32px;
  color: #90ad8a;
}

.read .ticks {
  color: #42b3e2;
}

.quote {
  display: flex;
  flex-direction: column;
  justify-content: center;
  min-height: 144px;
  margin-bottom: 12px;
  padding: 14px 24px;
  border: 1px solid #e8e8e8;
  border-left: 9px solid #058577;
  border-radius: 8px;
  background-color: #f6f7f7;
}

.quote-name {
  margin-bottom: 5px;
  color: #0b8275;
  font-size: 41px;
  font-weight: 500;
  line-height: 55px;
}

.quote-text {
  color: #757575;
  font-size: 42px;
  line-height: 49px;
}

/* emoji */
.emoji {
  display: inline-block;
  width: 68px;
  height: 68px;
  margin: 5px 4px 8px 0;
  vertical-align: -24px;
}

.emoji,
.thumb {
  fill: url(#skin);
  stroke: #d48a12;
  stroke-width: 2;
}

.emoji circle,
.emoji path {
  stroke: none;
}

.emoji .brow {
  fill: none;
  stroke: #6b3f12;
  stroke-width: 4;
  stroke-linecap: round;
}

.light {
  fill: url(#skin-light);
  stroke: #d8a58c;
}

.big-emoji {
  padding: 16px 10px 20px 6px;
}

.thumb {
  width: 90px;
  height: 96px;
}

/* composer */
.composer {
  display: flex;
  align-items: center;
  gap: 15px;
  padding: 24px 13px 13px 15px;
}

.input-pill {
  flex: 1;
  min-width: 0;
  display: flex;
  align-items: center;
  height: 136px;
  padding: 0 43px 0 31px;
  border-radius: 68px;
  background-color: #fff;
  box-shadow: 0 2px 2px rgba(0, 0, 0, 0.16);
}

.message-input {
  flex: 1;
  min-width: 0;
  height: 73px;
  margin-left: 32px;
  padding: 6px 0 0 1px;
  border: none;
  outline: none;
  /* text cursor */
  background: linear-gradient(#058577, #058577) no-repeat left / 6px 100%;
  font-family: inherit;
  font-size: 54px;
}

.message-input::placeholder {
  color: #a8a8a8;
}

.camera {
  margin-left: 70px;
}

.mic-button {
  flex: none;
  display: flex;
  align-items: center;
  justify-content: center;
  width: 141px;
  height: 141px;
  border-radius: 50%;
  background-color: #00897b;
  box-shadow: 0 4px 6px rgba(0, 0, 0, 0.25);
}
```
